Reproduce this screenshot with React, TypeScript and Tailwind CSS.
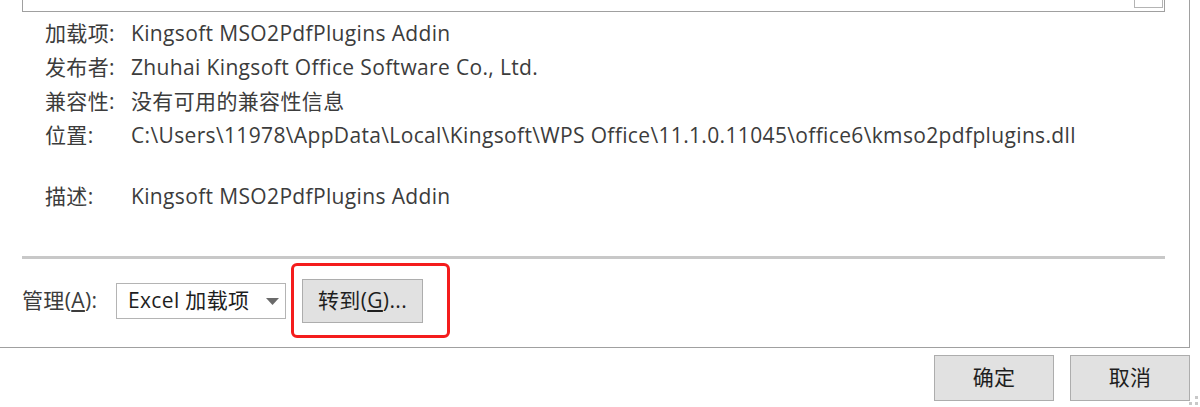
const font = { fontFamily: '"Open Sans", "Noto Sans CJK SC", sans-serif' }

type Row = { label: string; value: string }

const rows: Row[] = [
  { label: '加载项:', value: 'Kingsoft MSO2PdfPlugins Addin' },
  { label: '发布者:', value: 'Zhuhai Kingsoft Office Software Co., Ltd.' },
  { label: '兼容性:', value: '没有可用的兼容性信息' },
  {
    label: '位置:',
    value:
      'C:\\Users\\11978\\AppData\\Local\\Kingsoft\\WPS Office\\11.1.0.11045\\office6\\kmso2pdfplugins.dll',
  },
]

function DetailRow({ label, value }: Row) {
  return (
    <div className="flex h-[34px] items-center">
      <span className="w-[86px] shrink-0">{label}</span>
      <span className="whitespace-nowrap">{value}</span>
    </div>
  )
}

function DialogButton({ children }: { children: React.ReactNode }) {
  return (
    <button
      type="button"
      className="flex h-[46px] w-[120px] items-center justify-center border border-[#adadad] bg-[#e1e1e1] text-[21px] text-[#1e1e1e]"
    >
      {children}
    </button>
  )
}

export default function App() {
  return (
    <div
      className="relative h-[407px] w-[1200px] overflow-hidden bg-white text-[21px] tracking-[0.35px] text-[#3c3c3c]"
      style={font}
    >
      <div className="flex h-[348px] w-[1190px] flex-col border-r border-b border-[#a0a0a0]">
        {/* bottom edge of the add-in list */}
        <div className="ml-[22px] flex h-[12px] w-[1143px] shrink-0 justify-end border-x border-b border-[#a0a0a0]">
          <div className="mr-px h-[8px] w-[29px] border-x border-b border-[#b4b4b4]" />
        </div>

        <div className="mt-[5px] pl-[45px]">
          {rows.map((row) => (
            <DetailRow key={row.label} {...row} />
          ))}
          <div className="mt-[27px]">
            <DetailRow label="描述:" value="Kingsoft MSO2PdfPlugins Addin" />
          </div>
        </div>

        <div className="ml-[22px] mt-[42px] h-[3px] w-[1143px] bg-[#c8c8c8]" />

        <div className="flex h-[84px] items-center pl-[22px]">
          <span className="w-[94px] shrink-0">
            管理(<span className="underline underline-offset-2">A</span>):
          </span>
          <div className="flex h-[36px] w-[170px] items-center justify-between border border-[#b4b4b4] pl-[11px] pr-[6px] text-[#1e1e1e]">
            <span>Excel 加载项</span>
            <svg width="13" height="7" viewBox="0 0 13 7" aria-hidden="true">
              <path d="M0 0H13L6.5 7Z" fill="#6a6a6a" />
            </svg>
          </div>
          <div className="relative ml-[16px]">
            <button
              type="button"
              className="flex h-[44px] w-[121px] items-center justify-center border border-[#adadad] bg-[#e1e1e1] text-[21px] text-[#1e1e1e]"
            >
              转到(<span className="underline underline-offset-2">G</span>)...
            </button>
            <div className="pointer-events-none absolute -top-[16px] -left-[11px] h-[75px] w-[159px] rounded-[6px] border-[3px] border-[#f41c1c]" />
          </div>
        </div>
      </div>

      <div className="mt-[7px] flex w-[1190px] justify-end gap-[16px]">
        <DialogButton>确定</DialogButton>
        <DialogButton>取消</DialogButton>
      </div>

      <svg
        className="absolute right-[2px] bottom-[2px]"
        width="9"
        height="9"
        viewBox="0 0 9 9"
        aria-hidden="true"
      >
        <rect x="6" y="0" width="3" height="3" fill="#c8c8c8" />
        <rect x="0" y="6" width="3" height="3" fill="#c8c8c8" />
        <rect x="6" y="6" width="3" height="3" fill="#c8c8c8" />
      </svg>
    </div>
  )
}
